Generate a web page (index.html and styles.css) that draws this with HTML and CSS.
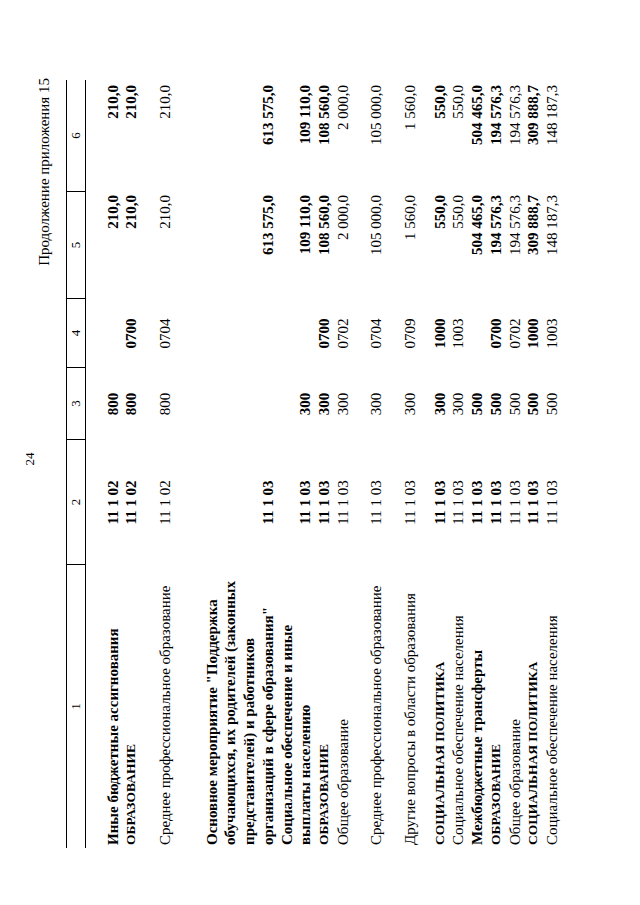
FILE: index.html
```html
<!DOCTYPE html>
<html lang="ru">
<head>
<meta charset="utf-8">
<title>Продолжение приложения 15</title>
<link rel="stylesheet" href="styles.css">
</head>
<body>
<div class="viewport">
<div class="page">
  <div class="folio">24</div>
  <div class="caption">Продолжение приложения 15</div>
  <div class="table">
    <div class="head">
      <div class="hc">1</div>
      <div class="hc">2</div>
      <div class="hc">3</div>
      <div class="hc">4</div>
      <div class="hc">5</div>
      <div class="hc">6</div>
    </div>
    <div class="tbody">
      <div class="row b">
        <div class="c1">Иные бюджетные ассигнования</div>
        <div class="c2">11 1 02</div>
        <div class="c3">800</div>
        <div class="c4"></div>
        <div class="c5">210,0</div>
        <div class="c6">210,0</div>
      </div>
      <div class="row b">
        <div class="c1 caps">ОБРАЗОВАНИЕ</div>
        <div class="c2">11 1 02</div>
        <div class="c3">800</div>
        <div class="c4">0700</div>
        <div class="c5">210,0</div>
        <div class="c6">210,0</div>
      </div>
      <div class="row gap15">
        <div class="c1">Среднее профессиональное образование</div>
        <div class="c2">11 1 02</div>
        <div class="c3">800</div>
        <div class="c4">0704</div>
        <div class="c5">210,0</div>
        <div class="c6">210,0</div>
      </div>
      <div class="row b gap28">
        <div class="c1">Основное мероприятие "Поддержка обучающихся, их родителей (законных представителей) и работников организаций в сфере образования"</div>
        <div class="c2">11 1 03</div>
        <div class="c3"></div>
        <div class="c4"></div>
        <div class="c5">613 575,0</div>
        <div class="c6">613 575,0</div>
      </div>
      <div class="row b">
        <div class="c1">Социальное обеспечение и иные выплаты населению</div>
        <div class="c2">11 1 03</div>
        <div class="c3">300</div>
        <div class="c4"></div>
        <div class="c5">109 110,0</div>
        <div class="c6">109 110,0</div>
      </div>
      <div class="row b">
        <div class="c1 caps">ОБРАЗОВАНИЕ</div>
        <div class="c2">11 1 03</div>
        <div class="c3">300</div>
        <div class="c4">0700</div>
        <div class="c5">108 560,0</div>
        <div class="c6">108 560,0</div>
      </div>
      <div class="row">
        <div class="c1">Общее образование</div>
        <div class="c2">11 1 03</div>
        <div class="c3">300</div>
        <div class="c4">0702</div>
        <div class="c5">2 000,0</div>
        <div class="c6">2 000,0</div>
      </div>
      <div class="row gap15">
        <div class="c1">Среднее профессиональное образование</div>
        <div class="c2">11 1 03</div>
        <div class="c3">300</div>
        <div class="c4">0704</div>
        <div class="c5">105 000,0</div>
        <div class="c6">105 000,0</div>
      </div>
      <div class="row gap15">
        <div class="c1">Другие вопросы в области образования</div>
        <div class="c2">11 1 03</div>
        <div class="c3">300</div>
        <div class="c4">0709</div>
        <div class="c5">1 560,0</div>
        <div class="c6">1 560,0</div>
      </div>
      <div class="row b gap11">
        <div class="c1 caps">СОЦИАЛЬНАЯ ПОЛИТИКА</div>
        <div class="c2">11 1 03</div>
        <div class="c3">300</div>
        <div class="c4">1000</div>
        <div class="c5">550,0</div>
        <div class="c6">550,0</div>
      </div>
      <div class="row">
        <div class="c1">Социальное обеспечение населения</div>
        <div class="c2">11 1 03</div>
        <div class="c3">300</div>
        <div class="c4">1003</div>
        <div class="c5">550,0</div>
        <div class="c6">550,0</div>
      </div>
      <div class="row b">
        <div class="c1">Межбюджетные трансферты</div>
        <div class="c2">11 1 03</div>
        <div class="c3">500</div>
        <div class="c4"></div>
        <div class="c5">504 465,0</div>
        <div class="c6">504 465,0</div>
      </div>
      <div class="row b">
        <div class="c1 caps">ОБРАЗОВАНИЕ</div>
        <div class="c2">11 1 03</div>
        <div class="c3">500</div>
        <div class="c4">0700</div>
        <div class="c5">194 576,3</div>
        <div class="c6">194 576,3</div>
      </div>
      <div class="row">
        <div class="c1">Общее образование</div>
        <div class="c2">11 1 03</div>
        <div class="c3">500</div>
        <div class="c4">0702</div>
        <div class="c5">194 576,3</div>
        <div class="c6">194 576,3</div>
      </div>
      <div class="row b">
        <div class="c1 caps">СОЦИАЛЬНАЯ ПОЛИТИКА</div>
        <div class="c2">11 1 03</div>
        <div class="c3">500</div>
        <div class="c4">1000</div>
        <div class="c5">309 888,7</div>
        <div class="c6">309 888,7</div>
      </div>
      <div class="row">
        <div class="c1">Социальное обеспечение населения</div>
        <div class="c2">11 1 03</div>
        <div class="c3">500</div>
        <div class="c4">1003</div>
        <div class="c5">148 187,3</div>
        <div class="c6">148 187,3</div>
      </div>
    </div>
  </div>
</div>
</div>
</body>
</html>
```

FILE: styles.css
```css
html, body {
  margin: 0;
  padding: 0;
  background: #fff;
}

.viewport {
  position: relative;
  width: 640px;
  height: 905px;
  overflow: hidden;
}

.page {
  box-sizing: border-box;
  width: 905px;
  height: 640px;
  padding: 24px 80px 0 57px;
  transform-origin: 0 0;
  transform: rotate(-90deg) translateX(-905px);
  font-family: "Liberation Serif", "Times New Roman", serif;
  color: #000;
}

.folio {
  font-size: 13px;
  line-height: 12px;
  text-align: center;
  padding-left: 10px;
}

.caption {
  font-size: 15px;
  line-height: 16px;
  text-align: right;
  margin-right: -2px;
}

.table {
  margin-top: 14px;
  width: 768px;
}

.head {
  display: grid;
  grid-template-columns: 283px 125px 72px 69px 107px 112px;
  border-top: 1px solid #000;
  border-bottom: 1px solid #000;
  height: 18px;
}

.hc {
  font-size: 13px;
  line-height: 18px;
  text-align: center;
}

.hc + .hc {
  border-left: 1px solid #000;
}

.tbody {
  padding-top: 17.6px;
  font-size: 15px;
  line-height: 18.7px;
}

.row {
  display: grid;
  grid-template-columns: 283px 125px 72px 69px 107px 112px;
  align-items: end;
}

.row.b {
  font-weight: bold;
}

.gap11 { margin-top: 11px; }
.gap15 { margin-top: 15px; }
.gap28 { margin-top: 28px; }

.c1 {
  padding-left: 3px;
  padding-right: 4px;
  text-align: left;
}

.caps {
  font-size: 13.5px;
}

.c2, .c3, .c4 {
  text-align: center;
}

.c5 {
  text-align: right;
  padding-right: 3px;
}

.c6 {
  text-align: right;
  padding-right: 5px;
}
```
